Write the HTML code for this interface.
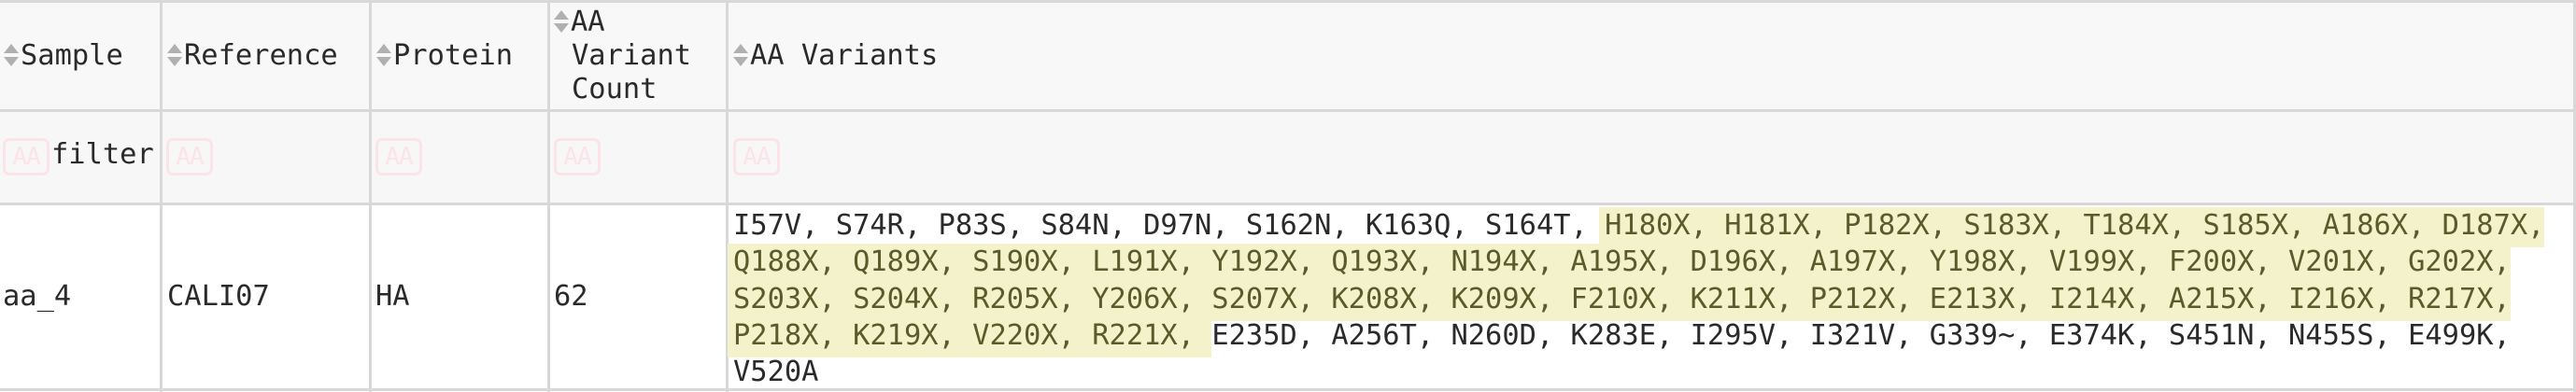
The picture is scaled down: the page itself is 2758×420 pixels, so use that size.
<!DOCTYPE html>
<html><head><meta charset="utf-8"><style>
body{margin:0;width:2758px;height:420px;background:#fff;overflow:hidden;font-family:"DejaVu Sans Mono","Liberation Mono",monospace;font-size:30.4px;color:#2a2a2a}
.hl{position:absolute;left:0;width:2756px;top:0;height:118px;background:#f8f8f8}
.fl{position:absolute;left:0;width:2756px;top:118px;height:100px;background:#f7f7f7}
.h{position:absolute;left:0;width:2758px;height:3px;background:#d8d8d8}
.v{position:absolute;top:0;height:420px;width:3px;background:#d8d8d8}
.t{position:absolute;white-space:nowrap;line-height:36px}
.s{position:absolute;width:18px;height:30px}
.f{position:absolute;top:148px;width:50px;height:40px;border:3px solid #fbe3e8;border-radius:7px;color:#fbe3e8;font-size:26px;line-height:34px;text-align:center;box-sizing:border-box;letter-spacing:-1px}
.d{position:absolute;left:785px;top:222px;width:1960px;line-height:39.3px;white-space:normal}
mark{background:#f4f2ca;color:#5b5a2a;padding:2px 0 6px;box-decoration-break:clone;-webkit-box-decoration-break:clone;box-shadow:-6px 0 0 #f4f2ca}
</style></head><body>
<div class="hl"></div><div class="fl"></div>
<div class="h" style="top:0"></div><div class="h" style="top:117px"></div><div class="h" style="top:217px"></div><div class="h" style="top:416px"></div>
<div class="v" style="left:171px"></div><div class="v" style="left:395px"></div><div class="v" style="left:586px"></div><div class="v" style="left:777px"></div><div class="v" style="left:2755px"></div>
<svg class="s" style="left:3px;top:44px" viewBox="0 0 18 30"><path d="M1 13L9 3L17 13Z M1 17L9 27L17 17Z" fill="#b0b0b0"/></svg>
<div class="t" style="left:22px;top:42px">Sample</div>
<svg class="s" style="left:178px;top:44px" viewBox="0 0 18 30"><path d="M1 13L9 3L17 13Z M1 17L9 27L17 17Z" fill="#b0b0b0"/></svg>
<div class="t" style="left:197px;top:42px">Reference</div>
<svg class="s" style="left:402px;top:44px" viewBox="0 0 18 30"><path d="M1 13L9 3L17 13Z M1 17L9 27L17 17Z" fill="#b0b0b0"/></svg>
<div class="t" style="left:421px;top:42px">Protein</div>
<svg class="s" style="left:592px;top:8px" viewBox="0 0 18 30"><path d="M1 13L9 3L17 13Z M1 17L9 27L17 17Z" fill="#b0b0b0"/></svg>
<div class="t" style="left:611px;top:6px">AA</div>
<div class="t" style="left:612px;top:42px">Variant</div>
<div class="t" style="left:612px;top:78px">Count</div>
<svg class="s" style="left:784px;top:44px" viewBox="0 0 18 30"><path d="M1 13L9 3L17 13Z M1 17L9 27L17 17Z" fill="#b0b0b0"/></svg>
<div class="t" style="left:803px;top:42px">AA Variants</div>
<div class="f" style="left:3px">AA</div><div class="t" style="left:55px;top:148px">filter</div>
<div class="f" style="left:178px">AA</div>
<div class="f" style="left:402px">AA</div>
<div class="f" style="left:593px">AA</div>
<div class="f" style="left:785px">AA</div>
<div class="t" style="left:3px;top:300px">aa_4</div>
<div class="t" style="left:179px;top:300px">CALI07</div>
<div class="t" style="left:402px;top:300px">HA</div>
<div class="t" style="left:593px;top:300px">62</div>
<div class="d">I57V, S74R, P83S, S84N, D97N, S162N, K163Q, S164T, <mark>H180X, H181X, P182X, S183X, T184X, S185X, A186X, D187X, Q188X, Q189X, S190X, L191X, Y192X, Q193X, N194X, A195X, D196X, A197X, Y198X, V199X, F200X, V201X, G202X, S203X, S204X, R205X, Y206X, S207X, K208X, K209X, F210X, K211X, P212X, E213X, I214X, A215X, I216X, R217X, P218X, K219X, V220X, R221X, </mark>E235D, A256T, N260D, K283E, I295V, I321V, G339~, E374K, S451N, N455S, E499K, V520A</div>
</body></html>
